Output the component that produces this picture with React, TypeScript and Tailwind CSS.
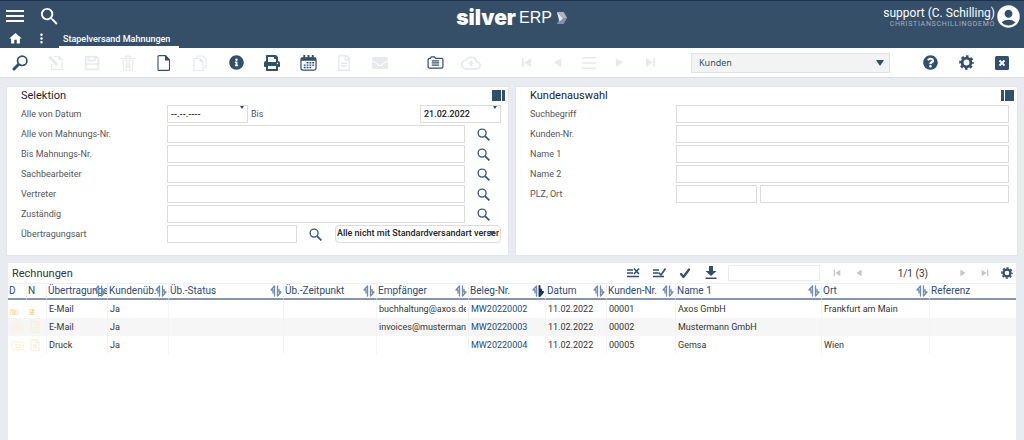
import { useState, type ReactNode } from 'react'
import { FaEnvelope, FaPrint, FaQuestionCircle, FaInfoCircle, FaRegFileAlt } from 'react-icons/fa'
import { MdAccountCircle, MdHome, MdMoreVert, MdOutlineCloudUpload, MdSearch } from 'react-icons/md'

const svgLine = { fill: 'none', stroke: 'currentColor', strokeLinecap: 'round', strokeLinejoin: 'round' } as const

function GearIcon({ className }: { className: string }) {
  return (
    <svg viewBox="0 0 16 16" className={className} fill="none" stroke="currentColor">
      <circle cx="8" cy="8" r="4.6" strokeWidth="3" />
      <circle cx="8" cy="8" r="6.7" strokeWidth="2.2" strokeDasharray="2.9 2.362" strokeDashoffset="1.45" />
    </svg>
  )
}

function FindIcon() {
  return (
    <svg viewBox="0 0 16 16" className="w-4 h-4" {...svgLine}>
      <circle cx="10.2" cy="5.8" r="4.7" strokeWidth="1.7" />
      <path d="M6.2 9.8 2 14" strokeWidth="3" />
    </svg>
  )
}

function EditIcon() {
  return (
    <svg viewBox="0 0 16 16" className="w-4 h-4" {...svgLine} strokeWidth="1.2">
      <path d="M6 1.5h5l3 3v10H3.5V9" />
      <path d="M2 2.5 8.5 9" strokeWidth="3" />
      <path d="M11 1.5v3h3" />
    </svg>
  )
}

function SaveIcon() {
  return (
    <svg viewBox="0 0 16 16" className="w-4 h-4" {...svgLine} strokeWidth="1.7">
      <path d="M1.7 1.7h10.6l2 2v10.6H1.7z" />
      <path d="M4.5 2v3.6h6.4V2M1.8 9h12.4" />
    </svg>
  )
}

function TrashIcon() {
  return (
    <svg viewBox="0 0 16 16" className="w-4 h-4" {...svgLine} strokeWidth="1.2">
      <path d="M1.5 3.5h13M5.5 3.2l.8-2h3.4l.8 2M3 5.5l.8 9.5h8.4l.8-9.5zM6.2 7l.2 6M8 7v6M9.8 7l-.2 6" />
    </svg>
  )
}

function PageIcon() {
  return (
    <svg viewBox="0 0 16 16" className="w-4 h-4" {...svgLine} strokeWidth="1.1">
      <path d="M3 .6h6.500L13.500 5v9.400c0 .6-.4 1-1 1H3c-.6 0-1-.4-1-1V1.600c0-.6.4-1 1-1z" />
      <path d="M9.500.9V5h4z" fill="currentColor" />
    </svg>
  )
}

function CopyIcon() {
  return (
    <svg viewBox="0 0 16 16" className="w-4 h-4" {...svgLine} strokeWidth="1.2">
      <path d="M5 3.500V1h6l3 3v8.500h-2.500" />
      <path d="M2 3.500h6l3 3v9H2zM8 3.500v3h3" />
    </svg>
  )
}

function CalendarIcon() {
  return (
    <svg viewBox="0 0 18 17" className="w-[17px] h-4" fill="currentColor">
      <rect x="1" y="3" width="16" height="13" rx="2" fill="none" stroke="currentColor" strokeWidth="1.300" />
      <path d="M1 3h16v3H1zM3.500 0h2v4h-2zM8 0h2v4H8zM12.500 0h2v4h-2z" />
      <path d="M7 7.500h2V9H7zM10 7.500h2V9h-2zM13 7.500h2V9h-2zM4 10h2v1.500H4zM7 10h2v1.500H7zM10 10h2v1.500h-2zM13 10h2v1.500h-2zM4 12.500h2V14H4zM7 12.500h2V14H7zM10 12.500h2V14h-2z" />
    </svg>
  )
}

function FolderIcon({ className }: { className: string }) {
  return (
    <svg viewBox="0 0 18 14" className={className} {...svgLine} strokeWidth="1.300">
      <path d="M2.500 2.500h1L4.500 1H8l1 1.500h6.500c1 0 1.500.6 1.500 1.500v7.500c0 1-.6 1.500-1.500 1.500h-13C1.600 13 1 12.400 1 11.500V4c0-.9.6-1.500 1.500-1.500z" />
      <path d="M5.500 5.200h7M5.500 7.500h7M5.500 9.800h7" />
    </svg>
  )
}

/* Record navigation: first / previous / next / last */
function NavIcon({ kind, className }: { kind: string; className: string }) {
  const d: Record<string, string> = {
    first: 'M1 1h2v10H1zM11 1v10L3.500 6z',
    prev: 'M10 1v10L2 6z',
    list: 'M-1 0h14v1.500H-1zM-1 5.200h14v1.500H-1zM-1 10.500h14V12H-1z',
    next: 'M2 1v10l8-5z',
    last: 'M9 1h2v10H9zM1 1v10l7.500-5z',
  }
  return (
    <svg viewBox="0 0 12 12" className={className} fill="currentColor" overflow="visible">
      <path d={d[kind]} />
    </svg>
  )
}

/* Half arrow up next to half arrow down, the down half is dark on the sorted column */
function SortIcon({ active }: { active?: boolean }) {
  return (
    <svg viewBox="0 0 12 12" className="absolute right-px top-px w-3 h-3 text-[#6f8bad]" {...svgLine} strokeWidth="1">
      <path d="M4.500 11V1L1 5h2v3" fill="none" strokeWidth="1.300" />
      <path
        d="M7.500 1v10L11 7H9V4.500"
        className={active ? 'text-[#17365c]' : ''}
        strokeWidth={active ? 2 : 1.300}
      />
    </svg>
  )
}

interface ToolProps {
  label: string
  children: ReactNode
  disabled?: boolean
  narrow?: boolean
}

function Tool({ label, children, disabled, narrow }: ToolProps) {
  return (
    <button
      type="button"
      aria-label={label}
      disabled={disabled}
      className={`${narrow ? 'w-[31px]' : 'w-9'} h-full flex items-center justify-center shrink-0 ${
        disabled ? 'text-[#e7e9ec]' : 'text-[#344f6b]'
      }`}
    >
      {children}
    </button>
  )
}

const inputClass = 'h-[18px] min-w-0 border border-[#dcdcdc] bg-white px-[3px] text-[9px] text-[#222] outline-none'

function Row({ id, label, children }: { id: string; label: string; children: ReactNode }) {
  return (
    <div className="flex items-center h-5">
      <label htmlFor={id} className="w-[146px] shrink-0 pt-0.5 text-[9px] text-[#555]">{label}</label>
      {children}
    </div>
  )
}

function LookupButton({ label }: { label: string }) {
  return (
    <button type="button" aria-label={`${label} suchen`} className="w-9 shrink-0 flex justify-center text-[#3c5a80]">
      <svg viewBox="0 0 14 14" className="w-[13px] h-[13px]" {...svgLine} strokeLinecap="butt">
        <circle cx="5.500" cy="5.500" r="4.300" strokeWidth="1.500" />
        <path d="M8.700 8.700 13.300 13.300" strokeWidth="2" />
      </svg>
    </button>
  )
}

function DateField({ id, value }: { id: string; value: string }) {
  return (
    <div className="relative w-[81px] shrink-0 flex">
      <input id={id} defaultValue={value} className={`${inputClass} w-full font-medium`} />
      <span className="absolute right-1 top-px border-x-2 border-t-3 border-x-transparent border-t-[#344f6b]" />
    </div>
  )
}

function PanelTitle({ title, barFirst }: { title: string; barFirst?: boolean }) {
  return (
    <div className="flex items-center h-[17px] pl-3.5 pr-[3px]">
      <h2 className="pt-px text-[11px] leading-4 text-[#1e1e1e]">{title}</h2>
      <button
        type="button"
        aria-label={`${title} anordnen`}
        className={`ml-auto flex gap-px text-[#344f6b] ${barFirst ? 'flex-row-reverse' : ''}`}
      >
        <span className="w-[9px] h-[11px] bg-current" />
        <span className="w-[3px] h-[11px] bg-current" />
      </button>
    </div>
  )
}

const lookups = ['Alle von Mahnungs-Nr.', 'Bis Mahnungs-Nr.', 'Sachbearbeiter', 'Vertreter', 'Zuständig']
const customerFields = ['Suchbegriff', 'Kunden-Nr.', 'Name 1', 'Name 2']

const columns = [
  { label: 'D', width: 'w-[18px]' },
  { label: 'N', width: 'w-5' },
  { label: 'Übertragungsweg', width: 'w-[61px]', sort: true },
  { label: 'Kundenüb.', width: 'w-[61px]', sort: true },
  { label: 'Üb.-Status', width: 'w-[115px]', sort: true },
  { label: 'Üb.-Zeitpunkt', width: 'w-[93px]', sort: true },
  { label: 'Empfänger', width: 'w-[92px]', sort: true },
  { label: 'Beleg-Nr.', width: 'w-[77px]', sort: true, active: true },
  { label: 'Datum', width: 'w-[61px]', sort: true },
  { label: 'Kunden-Nr.', width: 'w-[69px]', sort: true },
  { label: 'Name 1', width: 'w-[146px]', sort: true },
  { label: 'Ort', width: 'w-[108px]', sort: true },
  { label: 'Referenz', width: 'w-auto' },
]

const invoices = [
  ['E-Mail', 'Ja', '', '', 'buchhaltung@axos.de', 'MW20220002', '11.02.2022', '00001', 'Axos GmbH', 'Frankfurt am Main', ''],
  ['E-Mail', 'Ja', '', '', 'invoices@mustermann.de', 'MW20220003', '11.02.2022', '00002', 'Mustermann GmbH', '', ''],
  ['Druck', 'Ja', '', '', '', 'MW20220004', '11.02.2022', '00005', 'Gemsa', 'Wien', ''],
]

function Header() {
  return (
    <header className="h-12 bg-[#354f69] border-t border-[#1d3450] text-white grid grid-cols-[1fr_auto_1fr]">
      <div className="flex flex-col">
        <div className="flex items-center h-[30px] pl-1.5 gap-3.5">
          <button type="button" aria-label="Menü" className="w-[18px] h-3 flex flex-col justify-between">
            <span className="w-full h-0.5 bg-white" />
            <span className="w-full h-0.5 bg-white" />
            <span className="w-full h-0.5 bg-white" />
          </button>
          <button type="button" aria-label="Suche"><MdSearch className="w-[23px] h-[23px]" /></button>
        </div>
        <nav className="flex h-[17px] pl-[7px]">
          <a href="#start" aria-label="Start" className="w-[17px]"><MdHome className="w-[17px] h-[15px]" /></a>
          <button type="button" aria-label="Mehr" className="w-[35px] flex justify-center">
            <MdMoreVert className="w-[17px] h-[15px]" />
          </button>
          <a href="#mahnungen" className="px-1 text-[9px] leading-4 font-medium border-b-2 border-white w-[120px]">
            Stapelversand Mahnungen
          </a>
        </nav>
      </div>
      <div className="flex items-center h-[34px] gap-[3px]">
        <span className="font-['Inter',sans-serif] font-black text-[21px] leading-5">silver</span>
        <span className="font-['Liberation_Sans',sans-serif] text-[16px] leading-5">ERP</span>
        <svg viewBox="0 0 12 14" className="w-3 h-3 ml-px">
          <path d="M0 0h8l4 7H4z" fill="#a9b4c2" />
          <path d="M4 7h8l-4 7H0z" fill="#8292a5" />
          <path d="M0 0l7 7.500L3 11z" fill="#e3e7ec" />
        </svg>
      </div>
      <div className="flex justify-end items-start pt-1 pr-0.5">
        <div className="text-right">
          <p className="text-[12px] leading-4">support (C. Schilling)</p>
          <p className="text-[7px] leading-[6px] tracking-widest text-[#a3b1c0]">CHRISTIANSCHILLINGDEMO</p>
        </div>
        <MdAccountCircle className="w-[27px] h-[27px] -mt-0.5" />
      </div>
    </header>
  )
}

function Toolbar() {
  const [scope, setScope] = useState('Kunden')
  return (
    <div className="h-[30px] shrink-0 bg-white border-b border-[#dcdfe3] flex items-center pl-0.5 pr-1">
      <Tool label="Suchen"><FindIcon /></Tool>
      <Tool label="Bearbeiten" disabled><EditIcon /></Tool>
      <Tool label="Speichern" disabled><SaveIcon /></Tool>
      <Tool label="Löschen" disabled><TrashIcon /></Tool>
      <Tool label="Neu"><PageIcon /></Tool>
      <Tool label="Kopieren" disabled><CopyIcon /></Tool>
      <Tool label="Info"><FaInfoCircle className="w-[15px] h-[15px]" /></Tool>
      <Tool label="Drucken"><FaPrint className="w-4 h-4" /></Tool>
      <Tool label="Kalender"><CalendarIcon /></Tool>
      <Tool label="Notiz" disabled><FaRegFileAlt className="w-4 h-4" /></Tool>
      <Tool label="E-Mail" disabled><FaEnvelope className="w-4 h-4" /></Tool>
      <div className="flex h-full ml-[19px]">
        <Tool label="Dokumente"><FolderIcon className="w-[17px] h-[13px]" /></Tool>
        <Tool label="Hochladen" disabled><MdOutlineCloudUpload className="w-5 h-5" /></Tool>
      </div>
      <div className="flex h-full ml-[22px]">
        <Tool label="Erster" narrow disabled><NavIcon kind="first" className="w-[11px] h-[11px]" /></Tool>
        <Tool label="Zurück" narrow disabled><NavIcon kind="prev" className="w-[11px] h-[11px]" /></Tool>
        <Tool label="Liste" narrow disabled><NavIcon kind="list" className="w-3 h-3" /></Tool>
        <Tool label="Weiter" narrow disabled><NavIcon kind="next" className="w-[11px] h-[11px]" /></Tool>
        <Tool label="Letzter" narrow disabled><NavIcon kind="last" className="w-[11px] h-[11px]" /></Tool>
      </div>
      <div className="relative ml-[25px] w-[199px]">
        <select
          aria-label="Bereich"
          value={scope}
          onChange={e => setScope(e.target.value)}
          className="appearance-none block w-full h-5 pl-[7px] bg-[#f3f3f3] border border-[#dde3ea] font-['Noto_Sans',sans-serif] text-[9px] text-[#344f6b]"
        >
          <option>Kunden</option>
        </select>
        <span className="absolute right-1.5 top-[7px] border-x-4 border-t-6 border-x-transparent border-t-[#344f6b] pointer-events-none" />
      </div>
      <div className="flex h-full ml-auto">
        <Tool label="Hilfe"><FaQuestionCircle className="w-[15px] h-[15px]" /></Tool>
        <Tool label="Einstellungen"><GearIcon className="w-[15px] h-[15px]" /></Tool>
        <Tool label="Schließen">
          <svg viewBox="0 0 14 14" className="w-3.5 h-3.5">
            <rect width="14" height="14" rx="1.500" fill="currentColor" />
            <path d="M4.500 4.500l5 5M9.500 4.500l-5 5" stroke="#fff" strokeWidth="1.900" />
          </svg>
        </Tool>
      </div>
    </div>
  )
}

function SelectionPanel() {
  return (
    <section className="bg-white border border-[#e2e4e7] pb-[11px]">
      <PanelTitle title="Selektion" />
      <div className="pl-3.5 pr-[7px]">
        <Row id="from" label="Alle von Datum">
          <DateField id="from" value="--.--.----" />
          <label htmlFor="to" className="ml-[3px] pt-0.5 text-[9px] text-[#555]">Bis</label>
          <div className="ml-auto"><DateField id="to" value="21.02.2022" /></div>
        </Row>
        {lookups.map(label => (
          <Row key={label} id={label} label={label}>
            <input id={label} className={`${inputClass} flex-1`} />
            <LookupButton label={label} />
          </Row>
        ))}
        <Row id="transfer" label="Übertragungsart">
          <input id="transfer" className={`${inputClass} flex-1`} />
          <LookupButton label="Übertragungsart" />
          <div className="relative w-[166px] shrink-0 ml-0.5">
            <select
              aria-label="Versandart"
              className="appearance-none block w-full h-[18px] px-px border border-[#dcdcdc] rounded bg-white overflow-hidden text-[9px] font-medium text-[#222]"
            >
              <option>Alle nicht mit Standardversandart versenden</option>
            </select>
            <span className="absolute right-1.5 top-1.5 border-x-3 border-t-5 border-x-transparent border-t-[#344f6b] pointer-events-none" />
          </div>
        </Row>
      </div>
    </section>
  )
}

function CustomerPanel() {
  return (
    <section className="bg-white border border-[#e2e4e7] pb-[11px]">
      <PanelTitle title="Kundenauswahl" barFirst />
      <div className="pl-3.5 pr-2">
        {customerFields.map(label => (
          <Row key={label} id={`k-${label}`} label={label}>
            <input id={`k-${label}`} className={`${inputClass} flex-1`} />
          </Row>
        ))}
        <Row id="plz" label="PLZ, Ort">
          <input id="plz" className={`${inputClass} w-[81px]`} />
          <input aria-label="Ort" className={`${inputClass} ml-[3px] flex-1`} />
        </Row>
      </div>
    </section>
  )
}

function GridButton({ label, children, disabled }: { label: string; children: ReactNode; disabled?: boolean }) {
  return (
    <button
      type="button"
      aria-label={label}
      disabled={disabled}
      className={`${disabled ? 'w-[22px] text-[#c3c7cd]' : 'w-[26px] text-[#344f6b]'} flex justify-center`}
    >
      {children}
    </button>
  )
}

function InvoicePanel() {
  return (
    <section className="bg-white mx-2 mt-[7px] flex-1">
      <div className="flex items-center h-5 pl-1">
        <h2 className="pt-px text-[11px] leading-4 text-[#333]">Rechnungen</h2>
        <div className="flex items-center ml-auto">
          <GridButton label="Auswahl aufheben">
            <svg viewBox="0 0 14 12" className="w-3.5 h-3" {...svgLine} strokeLinecap="butt" strokeWidth="1.300">
              <path d="M1 3h6M1 6h6M1 9.500h12" />
              <path d="M8 1.500l5 5.500M13 1.500L8 7" strokeWidth="1.600" />
            </svg>
          </GridButton>
          <GridButton label="Alle auswählen">
            <svg viewBox="0 0 14 12" className="w-3.5 h-3" {...svgLine} strokeLinecap="butt" strokeWidth="1.300">
              <path d="M1 3h6M1 6h5M1 9.500h11" />
              <path d="M6.500 5.500L9 8l4.500-6.500" strokeWidth="1.600" />
            </svg>
          </GridButton>
          <GridButton label="Auswählen">
            <svg viewBox="0 0 12 12" className="w-3 h-3" {...svgLine} strokeWidth="2.200">
              <path d="M2 7l2.500 3L10 2.500" />
            </svg>
          </GridButton>
          <GridButton label="Herunterladen">
            <svg viewBox="0 0 12 14" className="w-3 h-3.5" fill="currentColor">
              <path d="M4 0h4v5h3.500L6 10 .5 5H4zM.5 11.500h11V13H.5z" />
            </svg>
          </GridButton>
        </div>
        <input aria-label="Filter" className="ml-1 w-[92px] h-4 border border-[#ececec] text-[9px] outline-none" />
        <div className="flex items-center ml-[6px] mr-7">
          <GridButton label="Erste Seite" disabled><NavIcon kind="first" className="w-2 h-2" /></GridButton>
          <GridButton label="Vorherige Seite" disabled><NavIcon kind="prev" className="w-2 h-2" /></GridButton>
        </div>
        <span className="pt-px text-[10px] text-[#333]">1/1 (3)</span>
        <div className="flex items-center ml-6">
          <GridButton label="Nächste Seite" disabled><NavIcon kind="next" className="w-2 h-2" /></GridButton>
          <GridButton label="Letzte Seite" disabled><NavIcon kind="last" className="w-2 h-2" /></GridButton>
        </div>
        <button type="button" aria-label="Spalten" className="w-5 pr-[3px] flex justify-end text-[#344f6b]">
          <GearIcon className="w-3 h-3" />
        </button>
      </div>
      <table className="w-full table-fixed border-separate border-spacing-0 text-left">
        <thead>
          <tr>
            {columns.map(c => (
              <th
                key={c.label}
                className={`${c.width} p-0 font-normal border-t border-t-[#f0f0f0] border-b-2 border-b-[#8497af] border-l border-l-[#f0f0f0] first:border-l-0`}
              >
                <div className="relative pl-px text-[10px] leading-[14px] text-[#2d4c70] whitespace-nowrap overflow-hidden">
                  {c.label}
                  {c.sort && <SortIcon active={c.active} />}
                </div>
              </th>
            ))}
          </tr>
        </thead>
        <tbody className="text-[9px] leading-3 text-[#333]">
          {invoices.map((row, i) => (
            <tr key={row[5]} className="h-[18px] even:bg-[#f6f6f6]">
              <td className="p-0">
                <FolderIcon className={i === 0 ? 'w-2 h-1.5 ml-0.5 mt-1.5 text-[#f0cd62]' : 'w-[13px] h-[11px] ml-[3px] text-[#fbf0d0]'} />
              </td>
              <td className="p-0">
                <FaRegFileAlt className={i === 0 ? 'w-1.5 h-1.5 ml-[3px] mt-1.5 text-[#eec145]' : 'w-3 h-3 ml-[3px] text-[#fbf0d0]'} />
              </td>
              {row.map((cell, j) => (
                <td key={j} className={`p-0 pl-0.5 border-l border-[#f3f3f3] ${j === 5 ? 'text-[#254a7a]' : ''}`}>
                  <div className="mr-0.5 whitespace-nowrap overflow-hidden">{cell}</div>
                </td>
              ))}
            </tr>
          ))}
        </tbody>
      </table>
    </section>
  )
}

export default function App() {
  return (
    <div className="min-h-screen flex flex-col bg-[#e8ebef] font-['Roboto',sans-serif]">
      <Header />
      <Toolbar />
      <main className="flex-1 flex flex-col pt-2">
        <div className="grid grid-cols-2 gap-1.5 px-1.5">
          <SelectionPanel />
          <CustomerPanel />
        </div>
        <InvoicePanel />
      </main>
    </div>
  )
}
